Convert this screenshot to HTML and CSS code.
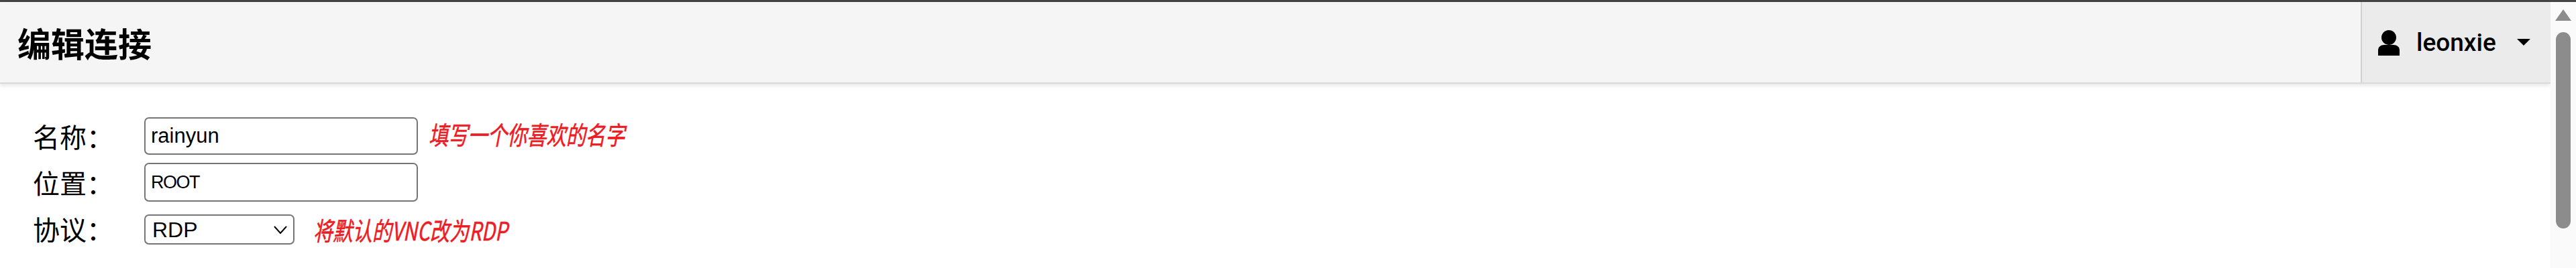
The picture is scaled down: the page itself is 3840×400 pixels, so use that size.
FILE: index.html
```html
<!DOCTYPE html>
<html lang="zh-CN">

<head>
    <meta charset="UTF-8">
    <title>编辑连接</title>
    <link rel="stylesheet" href="styles.css">
</head>

<body>

    <div class="page">

        <div class="main">

            <div class="header">
                <h1>编辑连接</h1>
                <div class="user-menu">
                    <svg class="user-icon" viewBox="0 0 32 38" width="32" height="38">
                        <circle cx="16" cy="11" r="11"></circle>
                        <path d="M0 38V30C0 25 4 22 9 22H23C28 22 32 25 32 30V38Z"></path>
                    </svg>
                    <span class="user-name">leonxie</span>
                    <span class="caret"></span>
                </div>
            </div>

            <form class="form">
                <div class="row row-name">
                    <label>名称：</label>
                    <input class="input-name" type="text" value="rainyun" />
                    <span class="note note-name">填写一个你喜欢的名字</span>
                </div>
                <div class="row row-location">
                    <label>位置：</label>
                    <input class="input-location" type="text" value="ROOT" />
                </div>
                <div class="row row-protocol">
                    <label>协议：</label>
                    <select>
                        <option>RDP</option>
                    </select>
                    <span class="note note-protocol">将默认的VNC改为RDP</span>
                </div>
            </form>

        </div>

        <div class="scrollbar">
            <div class="scroll-arrow"></div>
            <div class="scroll-thumb"></div>
        </div>

    </div>

</body>

</html>
```

FILE: styles.css
```css
body {
    font-family: "Noto Sans CJK SC", "Liberation Sans", sans-serif;
    margin: 0;
    overflow: hidden;
}

.page {
    border-top: 3px solid #444;
    box-sizing: border-box;
    display: flex;
    height: 100vh;
}

.main {
    flex: 1;
}

/* ====== HEADER ====== */

.header {
    align-items: stretch;
    background-color: #f5f5f5;
    border-bottom: 2px solid #d9d9d9;
    box-shadow: 0 3px 6px rgba(0, 0, 0, .1);
    display: flex;
    height: 120px;
    justify-content: space-between;
}

.header h1 {
    align-self: center;
    font-size: 50px;
    font-weight: 700;
    line-height: 1;
    margin: 0 0 0 26px;
}

.user-menu {
    align-items: center;
    background-color: #ebebeb;
    border-left: 2px solid #d0d0d0;
    box-sizing: border-box;
    display: flex;
    padding-left: 24px;
    width: 283px;
}

.user-icon {
    margin-top: 2px;
}

.user-name {
    font-family: Roboto, sans-serif;
    font-size: 37px;
    font-weight: 500;
    margin-left: 25px;
}

.caret {
    border-left: 10px solid transparent;
    border-right: 10px solid transparent;
    border-top: 10px solid #000;
    margin-left: 31px;
}

/* ====== FORM ====== */

.form {
    padding: 50px 0 0 49px;
}

.row {
    align-items: center;
    display: flex;
}

.row label {
    font-size: 40px;
    line-height: 1;
    width: 166px;
}

.row-protocol label {
    margin-bottom: 4px;
}

.row input,
.row select {
    background-color: #fff;
    border: 2px solid #767676;
    border-radius: 7px;
    box-sizing: border-box;
    color: #000;
    font-family: "Liberation Sans", Arial, sans-serif;
}

.row input {
    padding: 0 8px;
    width: 408px;
}

.row-location {
    margin-top: 12px;
}

.row-protocol {
    margin-top: 19px;
}

.input-name {
    font-size: 31px;
    height: 56px;
}

.input-location {
    font-size: 27px;
    height: 58px;
    letter-spacing: -1.5px;
}

.row select {
    appearance: none;
    background-image: url("data:image/svg+xml,%3Csvg xmlns='http://www.w3.org/2000/svg' width='20' height='12'%3E%3Cpath d='M1 1L10 11L19 1' fill='none' stroke='%23000' stroke-width='2'/%3E%3C/svg%3E");
    background-position: right 9px center;
    background-repeat: no-repeat;
    font-size: 32px;
    height: 45px;
    line-height: 1;
    padding: 0 0 0 10px;
    width: 224px;
}

.note {
    -webkit-text-stroke: .6px #ed1c24;
    color: #ed1c24;
    display: inline-block;
    font-size: 38px;
    font-style: italic;
    line-height: 1;
    transform: scaleX(.77);
    transform-origin: left center;
    white-space: nowrap;
}

.note-name {
    margin-bottom: 6px;
    margin-left: 16px;
}

.note-protocol {
    margin-left: 28px;
}

/* ====== SCROLLBAR ====== */

.scrollbar {
    background-color: #fafafa;
    flex: 0 0 38px;
}

.scroll-arrow {
    border-bottom: 17px solid #8c8c8c;
    border-left: 12px solid transparent;
    border-right: 12px solid transparent;
    height: 0;
    margin: 11px auto 0;
    width: 0;
}

.scroll-thumb {
    background-color: #8c8c8c;
    border-radius: 11px;
    height: 293px;
    margin: 17px auto 0;
    width: 22px;
}
```
